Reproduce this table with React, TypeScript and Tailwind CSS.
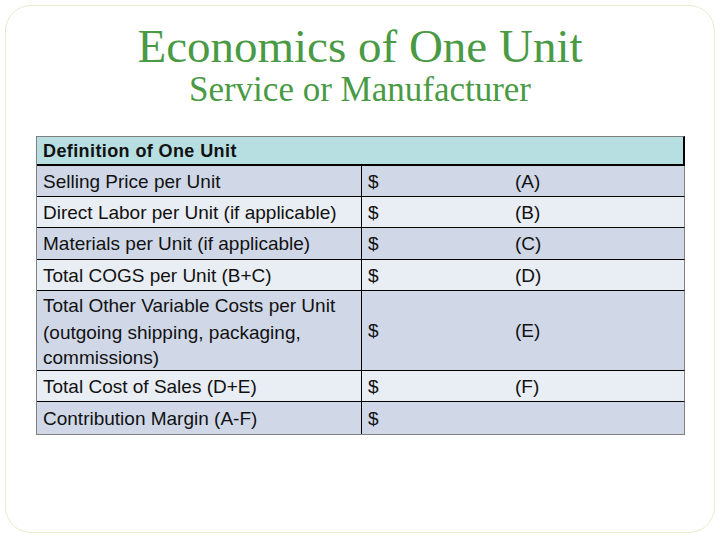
const rows = [
  { label: ['Selling Price per Unit'], code: '(A)', h: 'h-[31px]', bg: 'bg-[#d0d8e8]' },
  { label: ['Direct Labor per Unit (if applicable)'], code: '(B)', h: 'h-[31px]', bg: 'bg-[#e9edf4]' },
  { label: ['Materials per Unit (if applicable)'], code: '(C)', h: 'h-[32px]', bg: 'bg-[#d0d8e8]' },
  { label: ['Total COGS per Unit (B+C)'], code: '(D)', h: 'h-[31px]', bg: 'bg-[#e9edf4]' },
  {
    label: ['Total Other Variable Costs per Unit', '(outgoing shipping, packaging,', 'commissions)'],
    code: '(E)',
    h: 'h-[80px]',
    bg: 'bg-[#d0d8e8]',
  },
  { label: ['Total Cost of Sales (D+E)'], code: '(F)', h: 'h-[31px]', bg: 'bg-[#e9edf4]' },
  { label: ['Contribution Margin (A-F)'], code: '', h: 'h-[32px]', bg: 'bg-[#d0d8e8]' },
];

const tallLeading = ['leading-[26px]', 'leading-[28px]', 'leading-[22px]'];

export default function App() {
  return (
    <div className="w-[720px] h-[540px] bg-white p-[5px] font-['Liberation_Sans',Arial,sans-serif] text-[#111]">
      <div className="h-[528px] w-[710px] rounded-[26px] border border-[#ebebcf]">
        {/* Title */}
        <div className="pt-[17px] text-center font-['Liberation_Serif','Times_New_Roman',serif] text-[#4a9a45]">
          <h1 className="text-[47px] leading-[47px]">Economics of One Unit</h1>
          <h2 className="mt-[2px] text-[35px] leading-[35px]">Service or Manufacturer</h2>
        </div>

        {/* Table */}
        <div className="ml-[30px] mt-[29px] w-[649px] border-l border-b border-[#808080]">
          <div className="flex h-[30px] items-center border-t border-[#808080] border-r-2 border-r-black border-b-2 border-b-black bg-[#b7dee0] pl-[6px]">
            <span className="text-[18px] font-bold tracking-[0.4px] leading-none">Definition of One Unit</span>
          </div>

          {rows.map((row) => (
            <div key={row.code + row.label[0]} className={`flex ${row.h} ${row.bg} border-r border-[#808080] border-b border-b-black last:border-b-0`}>
              <div className={`w-[324px] pl-[6px] text-[19px] ${row.label.length > 1 ? 'pt-[2px]' : 'flex items-center'}`}>
                {row.label.length > 1 ? (
                  row.label.map((line, i) => (
                    <div key={line} className={tallLeading[i]}>
                      {line}
                    </div>
                  ))
                ) : (
                  <span className="leading-none">{row.label[0]}</span>
                )}
              </div>
              <div className="flex flex-1 items-center border-l border-black pl-[6px] text-[19px]">
                <span className="w-[147px] leading-none">$</span>
                <span className="leading-none">{row.code}</span>
              </div>
            </div>
          ))}
        </div>
      </div>
    </div>
  );
}
